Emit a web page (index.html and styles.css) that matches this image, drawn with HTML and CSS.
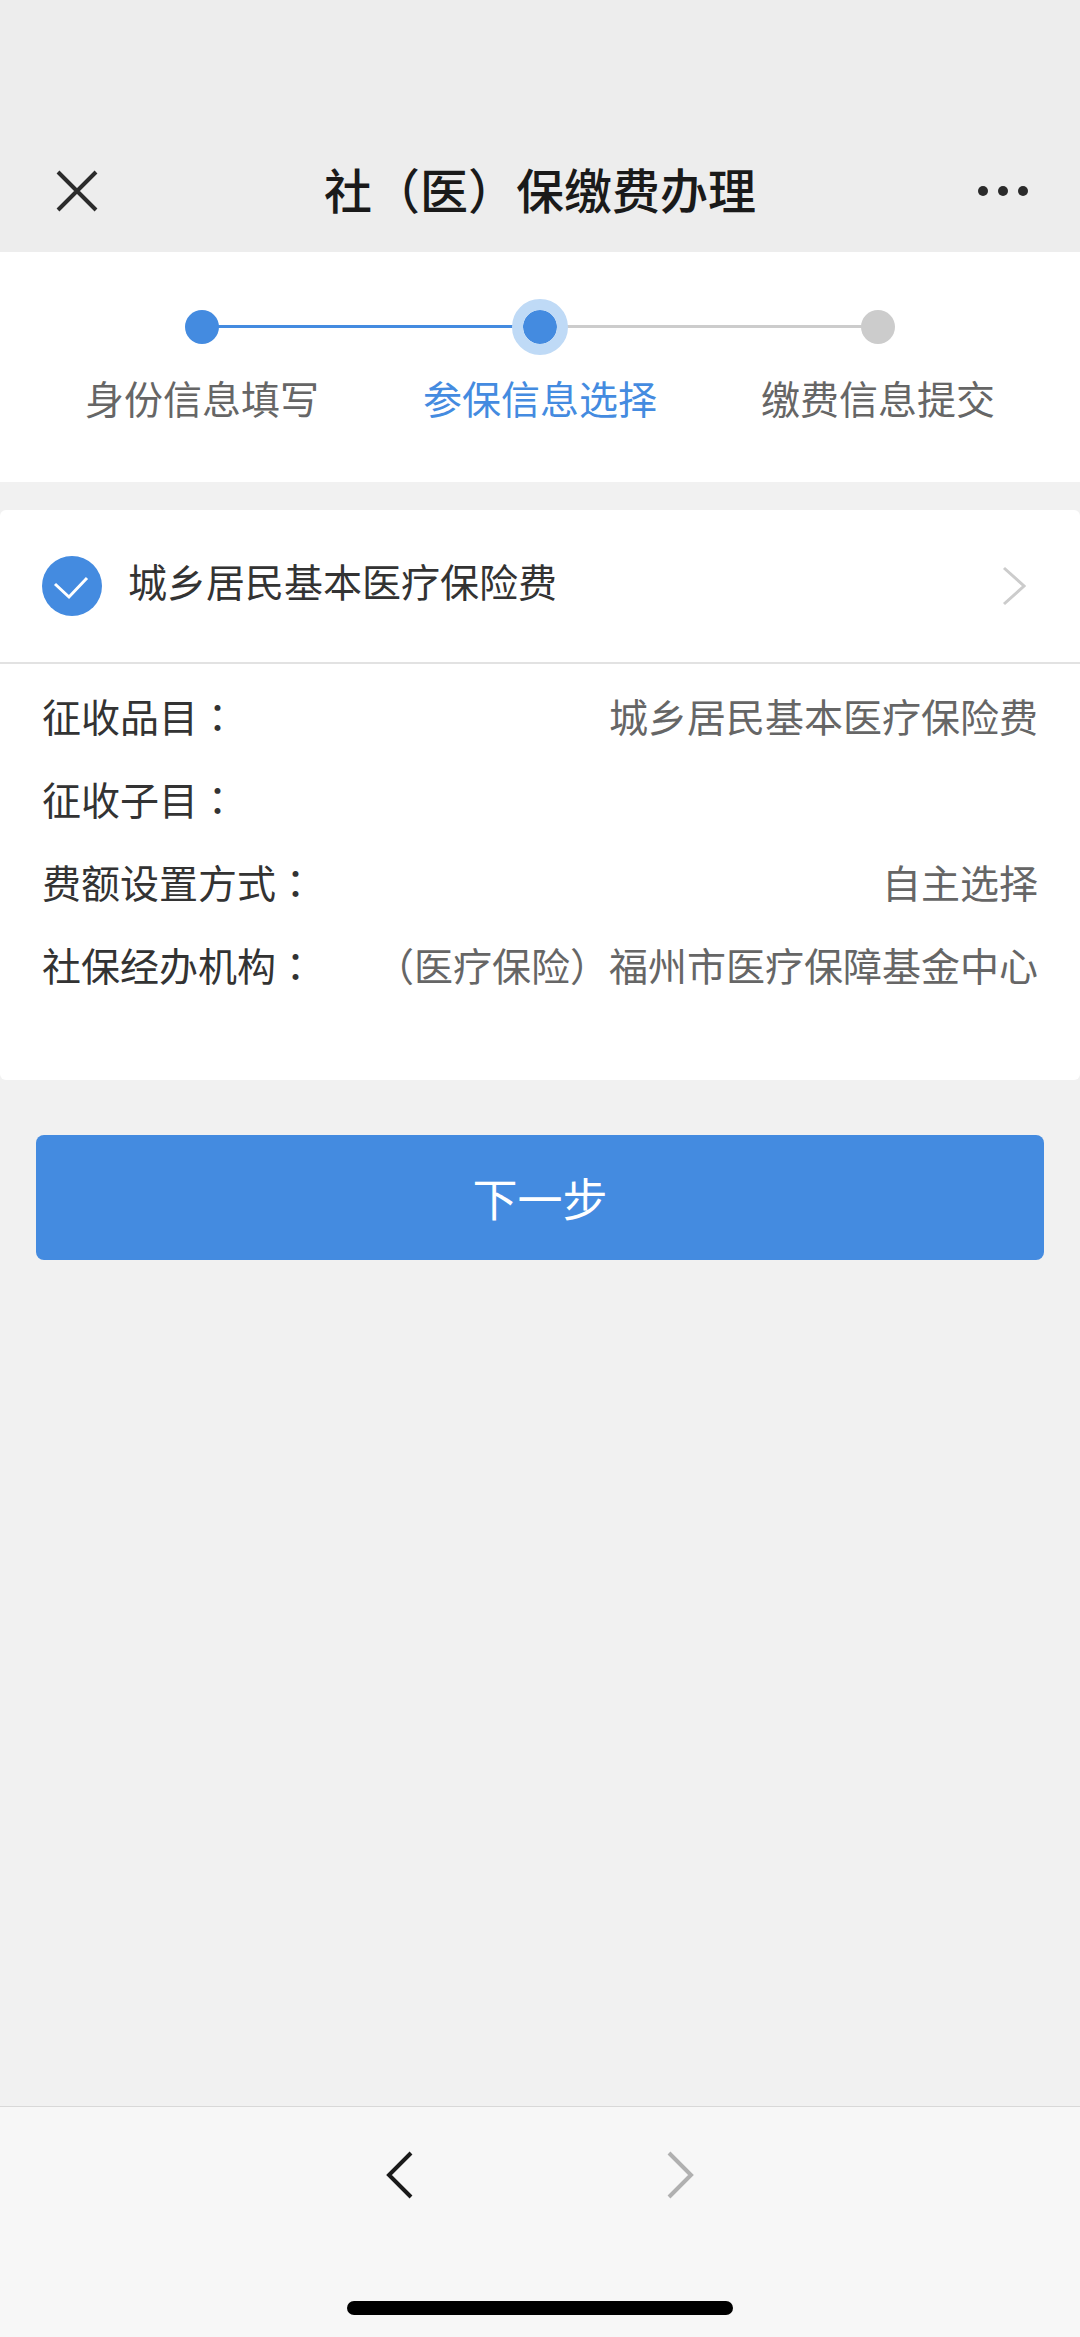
FILE: index.html
```html
<!DOCTYPE html>
<html lang="zh-CN">
<head>
    <meta charset="UTF-8">
    <meta name="viewport" content="width=device-width, initial-scale=1.0">
    <link rel="stylesheet" href="styles.css">
    <title>社（医）保缴费办理</title>
</head>
<body>
    <header class="header">
        <button class="icon-btn" type="button" aria-label="关闭">
            <svg width="44" height="44" viewBox="0 0 44 44"><path d="M3 3L41 41M41 3L3 41"/></svg>
        </button>
        <h1>社（医）保缴费办理</h1>
        <button class="icon-btn" type="button" aria-label="更多">
            <svg class="dots" width="50" height="12" viewBox="0 0 50 12"><circle cx="5" cy="6" r="5"/><circle cx="25" cy="6" r="5"/><circle cx="45" cy="6" r="5"/></svg>
        </button>
    </header>

    <main>
        <ol class="steps">
            <li class="step done"><span class="dot"></span>身份信息填写</li>
            <li class="step current"><span class="dot"></span>参保信息选择</li>
            <li class="step"><span class="dot"></span>缴费信息提交</li>
        </ol>

        <section class="card">
            <div class="card-head">
                <span class="check">
                    <input id="insurance" type="checkbox" checked>
                    <svg width="60" height="60" viewBox="0 0 60 60"><path d="M13 28L27 41L45 22"/></svg>
                </span>
                <label for="insurance">城乡居民基本医疗保险费</label>
                <button class="more" type="button" aria-label="查看详情">
                    <svg width="24" height="40" viewBox="0 0 24 40"><path d="M2 2L22 20L2 38"/></svg>
                </button>
            </div>
            <dl class="details">
                <div class="row"><dt>征收品目<span class="colon" lang="zh-TW">：</span></dt><dd>城乡居民基本医疗保险费</dd></div>
                <div class="row"><dt>征收子目<span class="colon" lang="zh-TW">：</span></dt><dd></dd></div>
                <div class="row"><dt>费额设置方式<span class="colon" lang="zh-TW">：</span></dt><dd>自主选择</dd></div>
                <div class="row"><dt>社保经办机构<span class="colon" lang="zh-TW">：</span></dt><dd>（医疗保险）福州市医疗保障基金中心</dd></div>
            </dl>
        </section>

        <button class="next-btn" type="button">下一步</button>
    </main>

    <footer class="footer">
        <nav class="toolbar">
            <button type="button" aria-label="后退">
                <svg width="28" height="50" viewBox="0 0 28 50"><path d="M25 3L3 25L25 47"/></svg>
            </button>
            <button type="button" aria-label="前进" disabled>
                <svg width="28" height="50" viewBox="0 0 28 50"><path d="M3 3L25 25L3 47"/></svg>
            </button>
        </nav>
        <div class="home-bar"></div>
    </footer>
</body>
</html>
```

FILE: styles.css
```css
* {
    box-sizing: border-box;
}

body {
    margin: 0;
    min-height: 100vh;
    display: flex;
    flex-direction: column;
    background: #f1f1f1;
    color: #333;
    font-family: "Noto Sans CJK SC", sans-serif;
    font-size: 39px;
}

button {
    padding: 0;
    border: 0;
    background: none;
    font: inherit;
}

svg {
    display: block;
    fill: none;
}

main {
    flex: 1;
}

/* Top bar, the padding leaves room for the status bar */
.header {
    display: flex;
    align-items: center;
    justify-content: space-between;
    padding: 130px 52px 0;
    background: #ededed;
}

.header h1 {
    margin: 0;
    padding-bottom: 6px;
    color: #1a1a1a;
    font-size: 48px;
    font-weight: 500;
    line-height: 116px;
}

.icon-btn {
    width: 50px;
    display: flex;
    justify-content: center;
}

.icon-btn svg {
    stroke: #2b2b2b;
    stroke-width: 4;
}

.icon-btn .dots {
    fill: #2b2b2b;
    stroke: none;
}

/* Progress steps */
.steps {
    display: flex;
    margin: 0;
    padding: 47px 33px 57px;
    background: #fff;
    list-style: none;
}

.step {
    position: relative;
    flex: 1;
    display: flex;
    flex-direction: column;
    align-items: center;
    gap: 14px;
    color: #666;
    line-height: 56px;
}

.step + .step::before {
    content: "";
    position: absolute;
    top: 26px;
    left: -50%;
    width: 100%;
    height: 3px;
    background: #ccc;
}

.step.current::before {
    background: #448be0;
}

.dot {
    position: relative;
    z-index: 1;
    width: 56px;
    height: 56px;
    border: 11px solid transparent;
    border-radius: 50%;
    background: #ccc padding-box;
}

.done .dot {
    background-color: #448be0;
}

.step.current {
    color: #448be0;
}

.current .dot {
    border-color: #bfdaf6;
    background-color: #448be0;
}

/* Insurance card */
.card {
    margin-top: 28px;
    border-radius: 6px;
    background: #fff;
}

.card-head {
    display: flex;
    align-items: center;
    gap: 26px;
    padding: 46px 54px 46px 42px;
    border-bottom: 2px solid #e2e2e2;
}

.card-head label {
    flex: 1;
    padding-bottom: 12px;
    line-height: 48px;
}

.check {
    display: grid;
}

.check input,
.check svg {
    grid-area: 1 / 1;
}

.check input {
    appearance: none;
    width: 60px;
    height: 60px;
    margin: 0;
    border-radius: 50%;
    background: #ccc;
}

.check input:checked {
    background: #448be0;
}

.check svg {
    stroke: #fff;
    stroke-width: 3;
    pointer-events: none;
}

.more svg {
    stroke: #ccc;
    stroke-width: 3;
}

.details {
    margin: 0;
    padding: 10px 42px 74px;
}

.row {
    display: flex;
    justify-content: space-between;
    line-height: 83px;
}

.row dd {
    margin: 0;
    color: #666;
}

/* The TC face centres the full-width colon in its box */
.colon {
    font-family: "Noto Sans CJK TC", sans-serif;
}

.next-btn {
    display: block;
    width: calc(100% - 72px);
    margin: 55px 36px;
    border-radius: 8px;
    background: #448be0;
    color: #fff;
    font-size: 45px;
    line-height: 125px;
}

/* Browser toolbar */
.footer {
    padding-bottom: 22px;
    border-top: 1px solid #d8d8d8;
    background: #f7f7f7;
}

.toolbar {
    display: flex;
    justify-content: center;
    gap: 252px;
    padding: 43px 0 101px;
}

.toolbar svg {
    stroke: #1a1a1a;
    stroke-width: 4;
}

.toolbar button:disabled svg {
    stroke: #b0b0b0;
}

.home-bar {
    width: 386px;
    height: 14px;
    margin: 0 auto;
    border-radius: 7px;
    background: #000;
}
```
